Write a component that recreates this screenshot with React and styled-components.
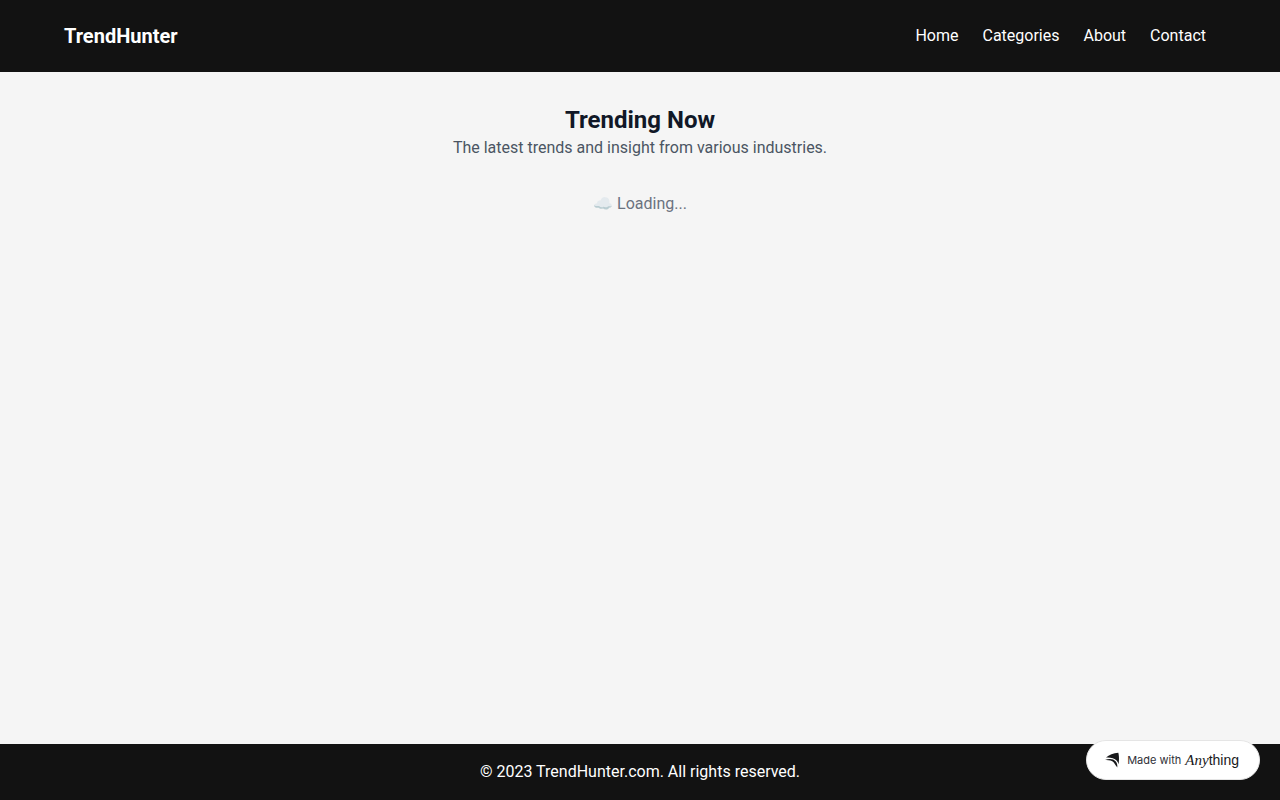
import React from "react";
import styled, { createGlobalStyle } from "styled-components";

const GlobalStyle = createGlobalStyle`
  *, *::before, *::after { box-sizing: border-box; }
  body {
    margin: 0;
    font-family: Roboto, "Liberation Sans", sans-serif;
    font-size: 16px;
    line-height: 24px;
    background: #f5f5f5;
  }
`;

const Page = styled.div`
  display: flex;
  flex-direction: column;
  min-height: 100vh;
`;

const Header = styled.header`
  display: flex;
  align-items: center;
  justify-content: space-between;
  padding: 22px 74px 22px 64px;
  background: #121212;
  color: #fff;
`;

const Brand = styled.div`
  font-size: 20px;
  font-weight: 700;
  line-height: 28px;
`;

const Nav = styled.nav`
  display: flex;
  gap: 24px;
`;

const NavLink = styled.a`
  color: inherit;
  text-decoration: none;
`;

const Main = styled.main`
  flex: 1;
  display: flex;
  flex-direction: column;
  gap: 32px;
  padding: 32px;
  text-align: center;
`;

const Title = styled.h1`
  margin: 0;
  font-size: 24px;
  font-weight: 700;
  line-height: 32px;
  color: #111827;
`;

const Subtitle = styled.p`
  margin: 0;
  color: #4b5563;
`;

const Loading = styled.p`
  margin: 0;
  color: #6b7280;
`;

const Footer = styled.footer`
  padding: 16px;
  background: #121212;
  color: #fff;
  text-align: center;
`;

const Badge = styled.a`
  position: fixed;
  right: 20px;
  bottom: 20px;
  display: flex;
  align-items: center;
  height: 40px;
  padding: 0 20px 0 18px;
  border: 1px solid #e5e5e5;
  border-radius: 20px;
  background: #fff;
  color: #18191b;
  text-decoration: none;
  white-space: nowrap;
`;

const BadgeMark = styled.svg`
  width: 14px;
  height: 16px;
  margin-right: 8px;
`;

const BadgeLabel = styled.span`
  margin-right: 4px;
  font: 400 11px/16px Inter, sans-serif;
  color: #2f3037;
`;

const Wordmark = styled.span`
  display: flex;
  align-items: baseline;
`;

const WordmarkItalic = styled.span`
  font: italic 400 15px/20px "Liberation Serif", serif;
`;

const WordmarkSans = styled.span`
  font: 400 14px/20px "Liberation Sans", sans-serif;
`;

const links = ["Home", "Categories", "About", "Contact"];

export default function App() {
  return (
    <Page>
      <GlobalStyle />
      <Header>
        <Brand>TrendHunter</Brand>
        <Nav>
          {links.map((label) => (
            <NavLink key={label} href={`#${label.toLowerCase()}`}>{label}</NavLink>
          ))}
        </Nav>
      </Header>
      <Main>
        <div>
          <Title>Trending Now</Title>
          <Subtitle>The latest trends and insight from various industries.</Subtitle>
        </div>
        <Loading>☁️ Loading...</Loading>
      </Main>
      <Footer>© 2023 TrendHunter.com. All rights reserved.</Footer>
      <Badge href="#anything">
        <BadgeMark viewBox="0 0 14 16" fill="currentColor" aria-hidden="true">
          <path d="M1 5.600C4 2.800 8.500 1 13.300 .8C14.100 3.500 14.200 8 13.600 12.200C12.900 9.400 11 7.200 7.800 6.300C5.600 5.600 3.400 5.400 1 5.600Z" />
          <path d="M0 8.100C3.800 6.200 8.400 6.600 10.800 9.400C12.100 11 12.500 13 12.300 15.400C11 14.300 10.300 12.500 8.800 10.600C6.800 8.500 3.600 7.900 0 8.100Z" />
        </BadgeMark>
        <BadgeLabel>Made with</BadgeLabel>
        <Wordmark>
          <WordmarkItalic>Any</WordmarkItalic>
          <WordmarkSans>thing</WordmarkSans>
        </Wordmark>
      </Badge>
    </Page>
  );
}
